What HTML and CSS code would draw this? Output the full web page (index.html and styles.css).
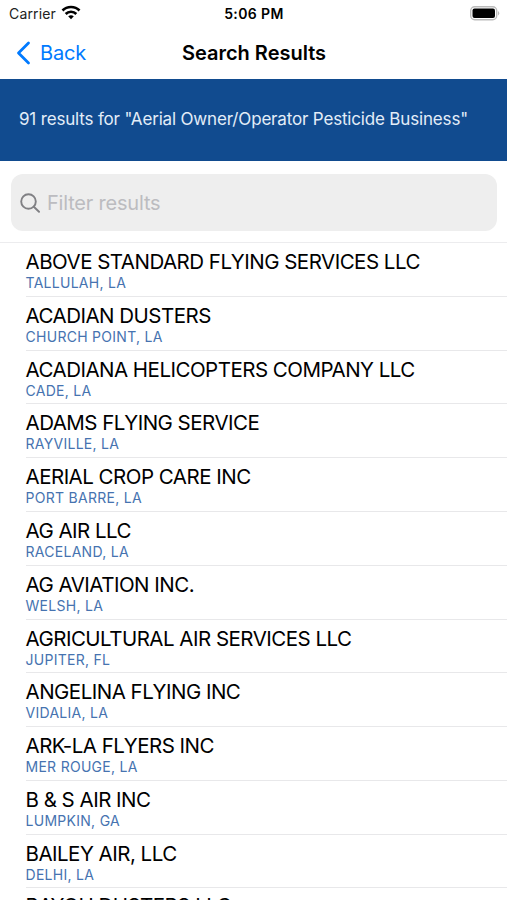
FILE: index.html
```html
<!DOCTYPE html>
<html lang="en"><head><meta charset="utf-8"><title>Search Results</title><link rel="stylesheet" href="styles.css"></head>
<body>
<div class="status"><div class="carrier"><span>Carrier</span><svg width="20" height="15" viewBox="0 0 20 15"><g fill="none" stroke="#000" stroke-width="2.6"><path d="M1.500 5.500C6 .8 14 .8 18.500 5.500"/><path d="M4.700 9C7.500 6 12.500 6 15.300 9"/></g><path d="M10 14.300 7.200 11.300Q10 9 12.800 11.300Z"/></svg></div><span class="time">5:06 PM</span><svg class="battery" width="30" height="15" viewBox="0 0 30 15"><rect x=".7" y=".7" width="26" height="13" rx="4" fill="#fff" stroke="#bbb" stroke-width="1.400"/><rect x="2.500" y="2.500" width="22.500" height="9.500" rx="2"/><path d="M28 5Q30.500 7.200 28 9.500Z" fill="#bbb"/></svg></div>
<header class="nav"><a class="back"><svg width="15" height="24" viewBox="0 0 15 24"><path d="M12.500 2 2.500 12 12.500 22" fill="none" stroke="#007aff" stroke-width="2.800" stroke-linecap="round" stroke-linejoin="round"/></svg><span>Back</span></a><h1>Search Results</h1></header>
<div class="banner"><span>91 results for "Aerial Owner/Operator Pesticide Business"</span></div>
<div class="search"><div class="field"><svg width="20" height="20" viewBox="0 0 20 20" fill="none" stroke="#808084" stroke-width="1.900" stroke-linecap="round"><circle cx="8.500" cy="8.500" r="7.300"/><path d="m13.800 13.800 5.200 5"/></svg><span>Filter results</span></div></div>
<ul class="list">
<li><b>ABOVE STANDARD FLYING SERVICES LLC</b><small>TALLULAH, LA</small></li>
<li><b>ACADIAN DUSTERS</b><small>CHURCH POINT, LA</small></li>
<li><b>ACADIANA HELICOPTERS COMPANY LLC</b><small>CADE, LA</small></li>
<li><b>ADAMS FLYING SERVICE</b><small>RAYVILLE, LA</small></li>
<li><b>AERIAL CROP CARE INC</b><small>PORT BARRE, LA</small></li>
<li><b>AG AIR LLC</b><small>RACELAND, LA</small></li>
<li><b>AG AVIATION INC.</b><small>WELSH, LA</small></li>
<li><b>AGRICULTURAL AIR SERVICES LLC</b><small>JUPITER, FL</small></li>
<li><b>ANGELINA FLYING INC</b><small>VIDALIA, LA</small></li>
<li><b>ARK-LA FLYERS INC</b><small>MER ROUGE, LA</small></li>
<li><b>B &amp; S AIR INC</b><small>LUMPKIN, GA</small></li>
<li><b>BAILEY AIR, LLC</b><small>DELHI, LA</small></li>
<li><b>BAYOU DUSTERS LLC</b></li>
</ul>
</body></html>
```
FILE: styles.css
```css
*{box-sizing:border-box}
body{margin:0;height:900px;overflow:hidden;background:#fff;color:#000;font-family:Inter,sans-serif;display:flex;flex-direction:column}
svg{display:block;flex:none}
.status{height:27px;flex:none;display:grid;grid-template-columns:1fr auto 1fr;align-items:center;padding:0 7px 0 9px;font-size:14px}
.carrier{display:flex;gap:5px;align-items:center;color:#222;letter-spacing:.15px}
.carrier svg{margin-top:-2px}
.time{font-weight:600;font-size:14px;letter-spacing:.4px;margin-left:-1px}
.battery{justify-self:end;margin-top:-1px}
.nav{height:52px;flex:none;display:grid;grid-template-columns:1fr auto 1fr;align-items:center;padding:0 16px 1px}
.back{display:flex;gap:9px;align-items:center;color:#007aff;font-size:20px;letter-spacing:-.2px}
h1{margin:0 -1px 0 0;font-size:20px;font-weight:600}
.banner{height:82px;flex:none;background:#114b8f;color:#e3edf8;display:flex;align-items:center;padding:0 19px 2px;font-size:17px;letter-spacing:-.17px;white-space:nowrap}
.search{height:82px;flex:none;padding:13px 10px 12px 11px;border-bottom:1px solid #ececee}
.field{height:57px;border-radius:12px;background:#eee;display:flex;align-items:center;gap:7px;padding-left:9px;color:#bcbcc0;font-size:20px;letter-spacing:-.2px}
.list{list-style:none;margin:0;padding:.2px 0 0 25.500px}
.list li{height:53.770px;border-bottom:1px solid #e8e8ea;padding-top:6px;white-space:nowrap}
.list li:last-child{padding-top:4.500px}
b,small{display:block}
b{font-size:20.500px;line-height:26px;font-weight:400;letter-spacing:-.51px}
small{font-size:14px;line-height:16px;color:#4673b0;letter-spacing:.28px}
```
